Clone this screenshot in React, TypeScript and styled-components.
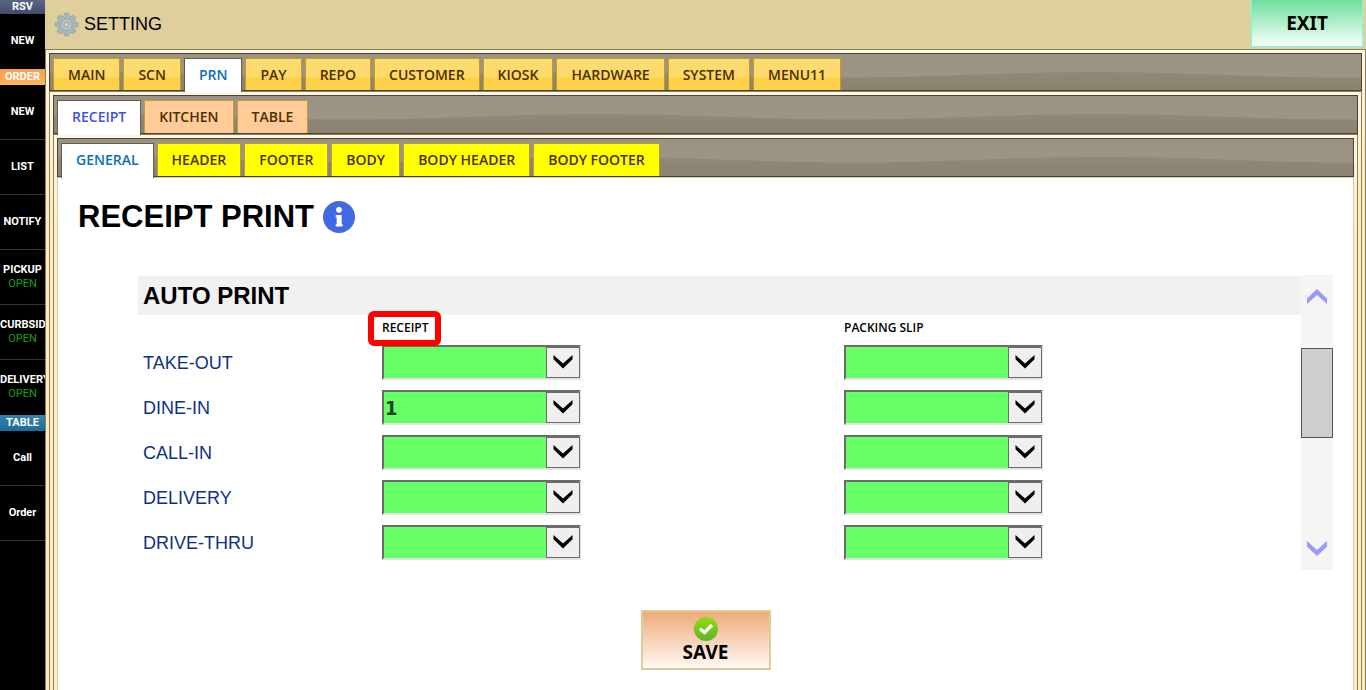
import React, { useState } from 'react';
import styled, { createGlobalStyle, css } from 'styled-components';

const GlobalStyle = createGlobalStyle`
  * { box-sizing: border-box; }
  body { margin: 0; background: #fff; font-family: "Liberation Sans", Arial, sans-serif; color: #000; }
  button, select { font: inherit; margin: 0; cursor: pointer; }
`;

const Page = styled.div`
  display: grid;
  grid-template-columns: 45px minmax(0, 1fr);
  min-height: 100vh;
`;

/* ---------- side rail ---------- */

const Rail = styled.nav`
  background: #000;
  overflow: hidden;
`;

const railTones = {
  slate: css`background: linear-gradient(#5a6588, #414c6c);`,
  orange: css`background: linear-gradient(#f4a04a, #ffb65c);`,
  blue: css`background: linear-gradient(#3384b0, #1d6c9c);`,
};

const RailHeading = styled.h2<{ $tone: keyof typeof railTones; $short?: boolean }>`
  display: flex;
  align-items: center;
  justify-content: center;
  height: ${({ $short }) => ($short ? 14 : 16)}px;
  margin: 0;
  font: bold 11px/14px Roboto, sans-serif;
  color: #fff;
  ${({ $tone }) => railTones[$tone]}
`;

const RailButton = styled.button<{ $last?: boolean }>`
  display: flex;
  flex-direction: column;
  align-items: safe center;
  justify-content: center;
  width: 100%;
  height: 55px;
  padding: 0;
  border: 0;
  border-bottom: 1px solid ${({ $last }) => ($last ? '#000' : '#333')};
  background: #000;
  color: #fff;
  font: bold 11px/14px Roboto, sans-serif;
  white-space: nowrap;
`;

const RailState = styled.span`
  color: #16a016;
  font-weight: normal;
`;

/* ---------- title bar ---------- */

const Main = styled.div`
  display: flex;
  flex-direction: column;
  min-width: 0;
`;

const TitleBar = styled.header`
  display: flex;
  align-items: flex-start;
  justify-content: space-between;
  height: 49px;
  padding: 0 2px 0 9px;
  background: #decf9c;
`;

const Title = styled.h1`
  display: flex;
  align-items: center;
  gap: 5px;
  height: 48px;
  margin: 0;
  font-size: 18px;
  font-weight: normal;
`;

const ExitButton = styled.button`
  width: 114px;
  height: 48px;
  padding: 0;
  border: 2px solid #a4ebc4;
  border-top: 0;
  background: linear-gradient(#6ddf9e, #f8fffb);
  color: #000;
  font: bold 19px/24px "Noto Sans", sans-serif;
`;

/* ---------- nested tab frames ---------- */

const Frame = styled.section`
  display: flex;
  flex: 1;
  flex-direction: column;
  padding: 3px 3px 0;
  border: 1px solid #8b7e5a;
  border-bottom: 0;
  background: linear-gradient(#fff6e2, #fbedc0 120px);
`;

const Panel = styled.section`
  display: flex;
  flex: 1;
  flex-direction: column;
  padding: 22px 20px 20px;
  border: 1px solid #cfcbb4;
  border-bottom: 0;
  background: #fff;
`;

const TabStrip = styled.div<{ $tall?: boolean }>`
  position: relative;
  display: flex;
  align-items: stretch;
  gap: 3px;
  height: ${({ $tall }) => ($tall ? 39 : 38)}px;
  padding: 4px 3px 0;
  border: 1px solid #494437;
`;

const WaveArt = styled.svg`
  position: absolute;
  inset: 0;
  width: 100%;
  height: 100%;
`;

type Tone = 'gold' | 'peach' | 'yellow';

const tabTones = {
  gold: css`
    border-color: #c99a1c;
    background: linear-gradient(#fedc74, #fdd968 58%, #fdd148 62%, #fdd148);
  `,
  peach: css`
    border-color: #c99a3c;
    background: #ffcc99;
  `,
  yellow: css`
    border-color: #b99a3c;
    background: #ffff00;
  `,
};

const Tab = styled.button<{ $tone: Tone; $active: boolean }>`
  position: relative;
  padding: 0 14px;
  border: 1px solid;
  border-bottom: 0;
  font: 600 14px/20px "Open Sans", sans-serif;
  white-space: nowrap;
  color: #4c3000;
  ${({ $tone }) => tabTones[$tone]}
  ${({ $active, $tone }) =>
    $active &&
    css`
      margin-bottom: -2px;
      padding-bottom: 2px;
      border-color: #655e4e;
      background: #fff;
      color: ${$tone === 'peach' ? '#3f51e3' : '#0b6fb8'};
    `}
`;

/* ---------- receipt form ---------- */

const PageTitle = styled.h2`
  display: flex;
  align-items: center;
  gap: 9px;
  height: 34px;
  margin: 0;
  font-size: 31px;
  line-height: 34px;
`;

const InfoButton = styled.button`
  display: flex;
  padding: 0;
  border: 0;
  background: none;
`;

const ScrollArea = styled.div`
  display: flex;
  height: 295px;
  margin: 41px 0 40px 60px;
`;

const Settings = styled.div`
  flex: 1;
  min-width: 0;
  padding-top: 1px;
`;

const GroupTitle = styled.h3`
  margin: 0;
  padding: 0 5px;
  background: #f1f1f1;
  font-size: 24px;
  line-height: 39px;
`;

const Row = styled.div`
  display: grid;
  grid-template-columns: 244fr 462fr 457fr;
  align-items: center;
  height: 45px;
`;

const HeadRow = styled(Row)`
  height: 25px;
`;

const ColumnTitle = styled.span`
  position: relative;
  justify-self: start;
  font: 600 12px/16px "Open Sans", sans-serif;
`;

const Highlight = styled.span`
  position: absolute;
  inset: -9px -13px -10px -14px;
  border: 6px solid #ff0000;
  border-radius: 6px;
  z-index: 1;
`;

const RowLabel = styled.label`
  padding-left: 5px;
  color: #0b3185;
  font-size: 18px;
  line-height: 24px;
`;

const SelectWrap = styled.span`
  position: relative;
  display: block;
  width: 199px;
  height: 35px;
`;

const Select = styled.select`
  appearance: none;
  width: 100%;
  height: 100%;
  padding: 0 34px 0 1px;
  border: 2px solid;
  border-color: #6b6b6b #e3e3e3 #e3e3e3 #6b6b6b;
  border-radius: 0;
  background: #66ff66;
  color: #263f26;
  font: bold 20px/28px "DejaVu Sans Condensed", "DejaVu Sans", sans-serif;
`;

const SelectArrow = styled.span`
  position: absolute;
  top: 2px;
  right: 1px;
  display: flex;
  align-items: center;
  justify-content: center;
  width: 34px;
  height: 31px;
  padding-bottom: 2px;
  border: 1px solid #6b6b6b;
  background: #efefef;
  pointer-events: none;
`;

const ScrollTrack = styled.div`
  display: flex;
  flex-direction: column;
  width: 32px;
  background: #f5f5f5;
`;

const ScrollButton = styled.button`
  display: flex;
  align-items: center;
  justify-content: center;
  height: 43px;
  padding: 0;
  border: 0;
  background: none;
`;

const ScrollLane = styled.div`
  flex: 1;
  padding-top: 30px;
`;

const ScrollThumb = styled.div`
  height: 90px;
  border: 1px solid #555;
  background: #cecece;
`;

const SaveButton = styled.button`
  display: flex;
  flex-direction: column;
  align-items: center;
  align-self: center;
  width: 130px;
  height: 60px;
  padding: 5px 0 0;
  border: 2px solid #dccd9b;
  background: linear-gradient(#eeab7a, #fff9f5);
  color: #000;
  font: bold 19px/22px "Noto Sans", sans-serif;
`;

/* ---------- drawings ---------- */

const GearIcon = () => (
  <svg width="25" height="25" viewBox="0 0 24 24" aria-hidden="true">
    <g fill="#a6b2b6" stroke="#95a2a6" strokeWidth=".5" strokeLinejoin="round">
      {[0, 45, 90, 135, 180, 225, 270, 315].map((a) => (
        <path key={a} d="M9 4.500 10.300 .9h3.400l1.300 3.600z" transform={`rotate(${a} 12 12)`} />
      ))}
    </g>
    <circle cx="12" cy="12" r="8.4" fill="#a9b5b9" />
    <circle cx="12" cy="12" r="5.4" fill="#b9c7ce" stroke="#93a3aa" strokeWidth=".8" />
    <circle cx="12" cy="12" r="3.1" fill="#a4b2b6" />
    <circle cx="12" cy="12" r="1.800" fill="#decf9c" />
  </svg>
);

const InfoIcon = () => (
  <svg width="32" height="32" viewBox="0 0 32 32" aria-hidden="true">
    <circle cx="16" cy="16" r="16" fill="#4169e1" />
    <circle cx="16" cy="8.8" r="2.900" fill="#fff" />
    <path d="M12.700 14h6v9.200h1v2.400h-7v-2.400h1v-6.800h-1z" fill="#fff" />
  </svg>
);

const CheckIcon = () => (
  <svg width="24" height="24" viewBox="0 0 24 24" aria-hidden="true">
    <defs>
      <linearGradient id="check-fill" x1="0" y1="0" x2="0" y2="1">
        <stop offset="0" stopColor="#93dc10" />
        <stop offset="1" stopColor="#5fb32c" />
      </linearGradient>
    </defs>
    <circle cx="12" cy="12" r="12" fill="url(#check-fill)" />
    <path d="M6 11.800 10.500 15.500 18 8" fill="none" stroke="#fff" strokeWidth="3.200" />
  </svg>
);

const Chevron = () => (
  <svg width="20" height="14" viewBox="0 0 20 14" aria-hidden="true">
    <path d="M.5 0 10 8.600 19.500 0v4.200L10 13.500.5 4.200z" fill="#000" />
  </svg>
);

const ScrollChevron = ({ down = false }: { down?: boolean }) => (
  <svg width="20" height="15" viewBox="0 0 20 15" aria-hidden="true">
    <path
      d="M0 0 10 9 20 0v5.500L10 15 0 5.500z"
      fill="#9999ff"
      transform={down ? undefined : 'rotate(180 10 7.5)'}
    />
  </svg>
);

const Wave = ({ id }: { id: string }) => (
  <WaveArt aria-hidden="true">
    <defs>
      <linearGradient id={`${id}-top`} x1="0" y1="0" x2="0" y2="1">
        <stop offset="0" stopColor="#9a9282" />
        <stop offset="1" stopColor="#9f9786" />
      </linearGradient>
      <linearGradient id={`${id}-low`} x1="0" y1="0" x2="0" y2="1">
        <stop offset="0" stopColor="#918977" />
        <stop offset="1" stopColor="#89806e" />
      </linearGradient>
      <pattern
        id={`${id}-wave`}
        width="500"
        height="40"
        patternUnits="userSpaceOnUse"
        patternTransform="translate(45 0)"
      >
        <path d="M0 18C90 18 160 23.500 250 23.500S410 18 500 18V40H0z" fill={`url(#${id}-low)`} />
      </pattern>
    </defs>
    <rect width="100%" height="100%" fill={`url(#${id}-top)`} />
    <rect width="100%" height="100%" fill={`url(#${id}-wave)`} />
  </WaveArt>
);

/* ---------- composition ---------- */

interface TabsProps {
  id: string;
  label: string;
  items: string[];
  initial: string;
  tone: Tone;
  tall?: boolean;
}

const Tabs = ({ id, label, items, initial, tone, tall }: TabsProps) => {
  const [active, setActive] = useState(initial);
  return (
    <TabStrip role="tablist" aria-label={label} $tall={tall}>
      <Wave id={id} />
      {items.map((item) => (
        <Tab
          key={item}
          role="tab"
          type="button"
          aria-selected={item === active}
          $active={item === active}
          $tone={tone}
          onClick={() => setActive(item)}
        >
          {item}
        </Tab>
      ))}
    </TabStrip>
  );
};

const CopySelect = ({ id, label, initial = '' }: { id: string; label: string; initial?: string }) => (
  <SelectWrap>
    <Select id={id} aria-label={label} defaultValue={initial}>
      <option value="" />
      <option value="1">1</option>
      <option value="2">2</option>
      <option value="3">3</option>
    </Select>
    <SelectArrow>
      <Chevron />
    </SelectArrow>
  </SelectWrap>
);

const MAIN_TABS = ['MAIN', 'SCN', 'PRN', 'PAY', 'REPO', 'CUSTOMER', 'KIOSK', 'HARDWARE', 'SYSTEM', 'MENU11'];
const PRINT_TABS = ['RECEIPT', 'KITCHEN', 'TABLE'];
const RECEIPT_TABS = ['GENERAL', 'HEADER', 'FOOTER', 'BODY', 'BODY HEADER', 'BODY FOOTER'];

const ORDER_TYPES = [
  { name: 'TAKE-OUT', receipt: '' },
  { name: 'DINE-IN', receipt: '1' },
  { name: 'CALL-IN', receipt: '' },
  { name: 'DELIVERY', receipt: '' },
  { name: 'DRIVE-THRU', receipt: '' },
];

const OPEN_QUEUES = ['PICKUP', 'CURBSIDE', 'DELIVERY'];

export default function App() {
  return (
    <>
      <GlobalStyle />
      <Page>
        <Rail aria-label="Orders">
          <RailHeading $tone="slate" $short>RSV</RailHeading>
          <RailButton $last>NEW</RailButton>
          <RailHeading $tone="orange">ORDER</RailHeading>
          <RailButton>NEW</RailButton>
          <RailButton>LIST</RailButton>
          <RailButton>NOTIFY</RailButton>
          {OPEN_QUEUES.map((queue) => (
            <RailButton key={queue} $last={queue === 'DELIVERY'}>
              <span>{queue}</span>
              <RailState>OPEN</RailState>
            </RailButton>
          ))}
          <RailHeading $tone="blue">TABLE</RailHeading>
          <RailButton>Call</RailButton>
          <RailButton>Order</RailButton>
        </Rail>

        <Main>
          <TitleBar>
            <Title>
              <GearIcon />
              SETTING
            </Title>
            <ExitButton type="button">EXIT</ExitButton>
          </TitleBar>

          <Frame>
            <Tabs id="main" label="Settings" items={MAIN_TABS} initial="PRN" tone="gold" />
            <Frame>
              <Tabs id="print" label="Print" items={PRINT_TABS} initial="RECEIPT" tone="peach" tall />
              <Frame>
                <Tabs id="receipt" label="Receipt" items={RECEIPT_TABS} initial="GENERAL" tone="yellow" tall />
                <Panel>
                  <PageTitle>
                    RECEIPT PRINT
                    <InfoButton type="button" aria-label="Information">
                      <InfoIcon />
                    </InfoButton>
                  </PageTitle>

                  <ScrollArea>
                    <Settings>
                      <GroupTitle>AUTO PRINT</GroupTitle>
                      <HeadRow>
                        <span />
                        <ColumnTitle>
                          RECEIPT
                          <Highlight />
                        </ColumnTitle>
                        <ColumnTitle>PACKING SLIP</ColumnTitle>
                      </HeadRow>
                      {ORDER_TYPES.map(({ name, receipt }) => (
                        <Row key={name}>
                          <RowLabel htmlFor={`${name}-receipt`}>{name}</RowLabel>
                          <CopySelect id={`${name}-receipt`} label={`${name} receipt`} initial={receipt} />
                          <CopySelect id={`${name}-slip`} label={`${name} packing slip`} />
                        </Row>
                      ))}
                    </Settings>
                    <ScrollTrack>
                      <ScrollButton type="button" aria-label="Scroll up">
                        <ScrollChevron />
                      </ScrollButton>
                      <ScrollLane>
                        <ScrollThumb />
                      </ScrollLane>
                      <ScrollButton type="button" aria-label="Scroll down">
                        <ScrollChevron down />
                      </ScrollButton>
                    </ScrollTrack>
                  </ScrollArea>

                  <SaveButton type="button">
                    <CheckIcon />
                    SAVE
                  </SaveButton>
                </Panel>
              </Frame>
            </Frame>
          </Frame>
        </Main>
      </Page>
    </>
  );
}
